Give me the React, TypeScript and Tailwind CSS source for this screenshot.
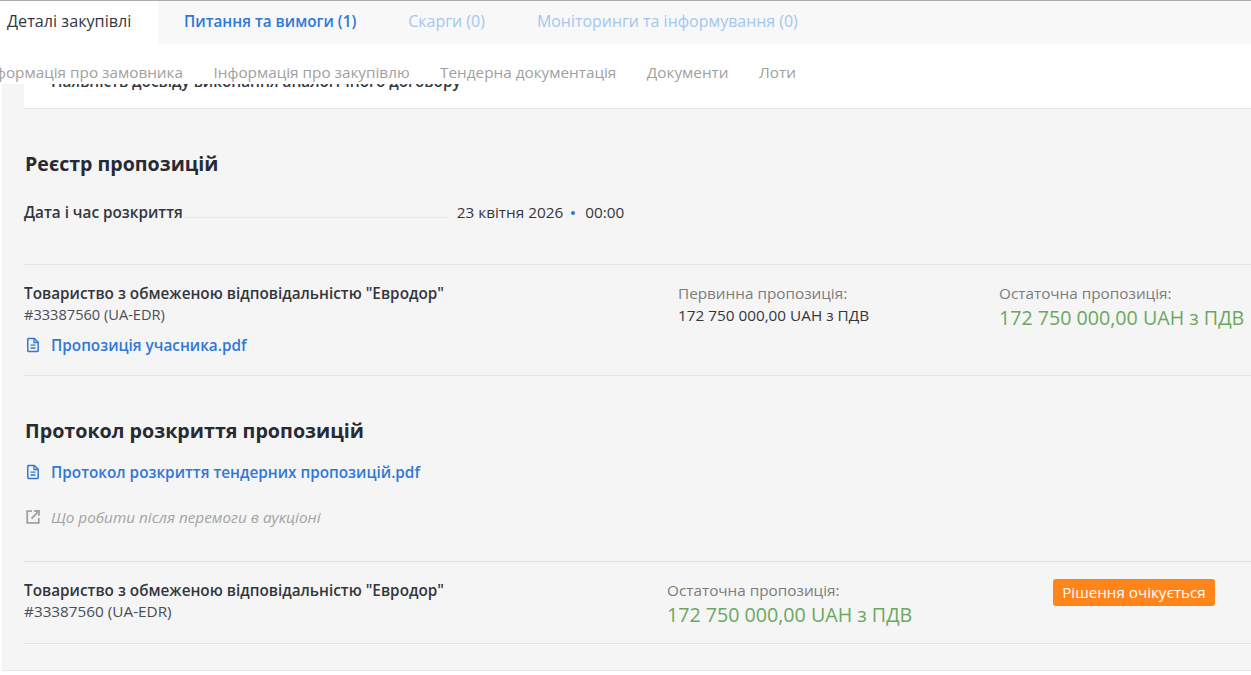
import React from 'react';

const font = { fontFamily: '"Open Sans", sans-serif' };

const FileIcon = () => (
  <svg viewBox="0 0 16 16" className="h-4 w-4 shrink-0" fill="none" stroke="#2f78d6" strokeWidth="1.5">
    <path d="M2.8 2.2c0-.4.3-.7.7-.7h5.8L13.2 5.2v8.6c0 .4-.3.7-.7.7H3.5c-.4 0-.7-.3-.7-.7V2.2z" />
    <path d="M5.5 8.2h5M5.5 11h5M9 1.8v3.7h3.8" strokeWidth="1.3" />
  </svg>
);

const ExternalIcon = () => (
  <svg viewBox="0 0 16 16" className="h-4 w-4 shrink-0" fill="none" stroke="#a3a3a3" strokeWidth="1.8">
    <path d="M7 2.2H2.2v11.6h11.6V9" />
    <path d="M6.5 9.5 13.5 2.5M9.2 2h4.8v4.8" />
  </svg>
);

const FileLink: React.FC<{ label: string }> = ({ label }) => (
  <a href="#" className="flex items-center gap-[10px] pl-[1px] text-[15.3px] leading-[20px] font-semibold text-[#2f78d6]">
    <FileIcon />
    {label}
  </a>
);

const App: React.FC = () => {
  return (
    <div className="h-[675px] w-[1251px] overflow-hidden bg-white" style={font}>
      <div className="h-px bg-[#ababab]" />
      <nav className="flex h-[43px] bg-[#f8f8f8] text-[15.95px] font-medium">
        <div className="flex w-[158px] items-center bg-white pb-[2px] pl-[7px] text-[16.2px] text-[#33363d]">Деталі закупівлі</div>
        <div className="flex items-center pb-[2px] pl-[26px] text-[15.3px] font-semibold text-[#2f78d6]">Питання та вимоги (1)</div>
        <div className="flex items-center pb-[2px] pl-[52px] text-[#a3c6f0]">Скарги (0)</div>
        <div className="flex items-center pb-[2px] pl-[52px] text-[#a3c6f0]">Моніторинги та інформування (0)</div>
      </nav>
      <div className="flex h-[40px] items-center gap-[30.5px] overflow-hidden bg-white pt-[16px] text-[15.3px] text-[#a0a0a0]">
        <span className="ml-[-19px] whitespace-nowrap">Інформація про замовника</span>
        <span className="whitespace-nowrap">Інформація про закупівлю</span>
        <span className="whitespace-nowrap">Тендерна документація</span>
        <span className="whitespace-nowrap">Документи</span>
        <span className="whitespace-nowrap">Лоти</span>
      </div>
      <div className="ml-[2px] h-[587px] overflow-hidden border-b border-[#e6e6e6] bg-[#f5f5f5] pl-[22px]">
        <div className="h-[25px] overflow-hidden border-b border-[#e6e6e6] bg-white pl-[27px]">
          <div className="mt-[-13px] whitespace-nowrap text-[15.3px] leading-[20px] font-semibold text-[#33363d]">
            Наявність досвіду виконання аналогічного договору
          </div>
        </div>

        <h2 className="mt-[41px] pl-[1px] text-[19.6px] leading-[27px] font-bold text-[#272a33]">Реєстр пропозицій</h2>
        <div className="mt-[25px] flex h-[20px] items-center text-[15.3px] text-[#33363d]">
          <span className="font-semibold">Дата і час розкриття</span>
          <span className="mt-[10px] ml-[2px] h-px w-[264px] bg-[#e8e8e8]" />
          <span className="ml-[8px]">23 квітня 2026</span>
          <span className="mt-[1px] mr-[10px] ml-[8px] h-[4px] w-[4px] rounded-full bg-[#2f78d6]" />
          <span>00:00</span>
        </div>

        <div className="mt-[42px] flex h-[112px] border-t border-b border-[#e3e3e3] pt-[18px]">
          <div className="w-[654px]">
            <div className="text-[15.3px] leading-[20px] font-semibold text-[#33363d]">
              Товариство з обмеженою відповідальністю "Евродор"
            </div>
            <div className="mt-[1px] text-[14.6px] leading-[20px] text-[#4a4d55]">#33387560 (UA-EDR)</div>
            <div className="mt-[11px]">
              <FileLink label="Пропозиція учасника.pdf" />
            </div>
          </div>
          <div className="w-[321px]">
            <div className="text-[15.3px] leading-[20px] text-[#7c7c7c]">Первинна пропозиція:</div>
            <div className="mt-[2px] text-[15.3px] leading-[20px] text-[#33363d]">172 750 000,00 UAH з ПДВ</div>
          </div>
          <div className="whitespace-nowrap">
            <div className="text-[15.3px] leading-[20px] text-[#7c7c7c]">Остаточна пропозиція:</div>
            <div className="mt-[2px] text-[19.65px] leading-[26px] text-[#6aa85f]">172 750 000,00 UAH з ПДВ</div>
          </div>
        </div>

        <h2 className="mt-[41px] pl-[1px] text-[19.7px] leading-[27px] font-bold text-[#272a33]">Протокол розкриття пропозицій</h2>
        <div className="mt-[18px]">
          <FileLink label="Протокол розкриття тендерних пропозицій.pdf" />
        </div>
        <a href="#" className="mt-[25px] flex items-center gap-[10px] pl-[1px] text-[15.3px] leading-[20px] text-[#a3a3a3] italic">
          <ExternalIcon />
          Що робити після перемоги в аукціоні
        </a>

        <div className="mt-[34px] flex h-[83px] border-t border-b border-[#e3e3e3] pt-[18px]">
          <div className="w-[643px]">
            <div className="text-[15.3px] leading-[20px] font-semibold text-[#33363d]">
              Товариство з обмеженою відповідальністю "Евродор"
            </div>
            <div className="mt-[1px] text-[15.3px] leading-[20px] text-[#4a4d55]">#33387560 (UA-EDR)</div>
          </div>
          <div className="w-[386px]">
            <div className="text-[15.3px] leading-[20px] text-[#7c7c7c]">Остаточна пропозиція:</div>
            <div className="mt-[2px] text-[19.65px] leading-[26px] text-[#6aa85f]">172 750 000,00 UAH з ПДВ</div>
          </div>
          <div>
            <span className="mt-[-1px] flex h-[27px] w-[162px] items-center justify-center rounded-[3px] bg-[#ff851b] text-[15.2px] whitespace-nowrap text-white">
              Рішення очікується
            </span>
          </div>
        </div>
      </div>
    </div>
  );
};

export default App;
